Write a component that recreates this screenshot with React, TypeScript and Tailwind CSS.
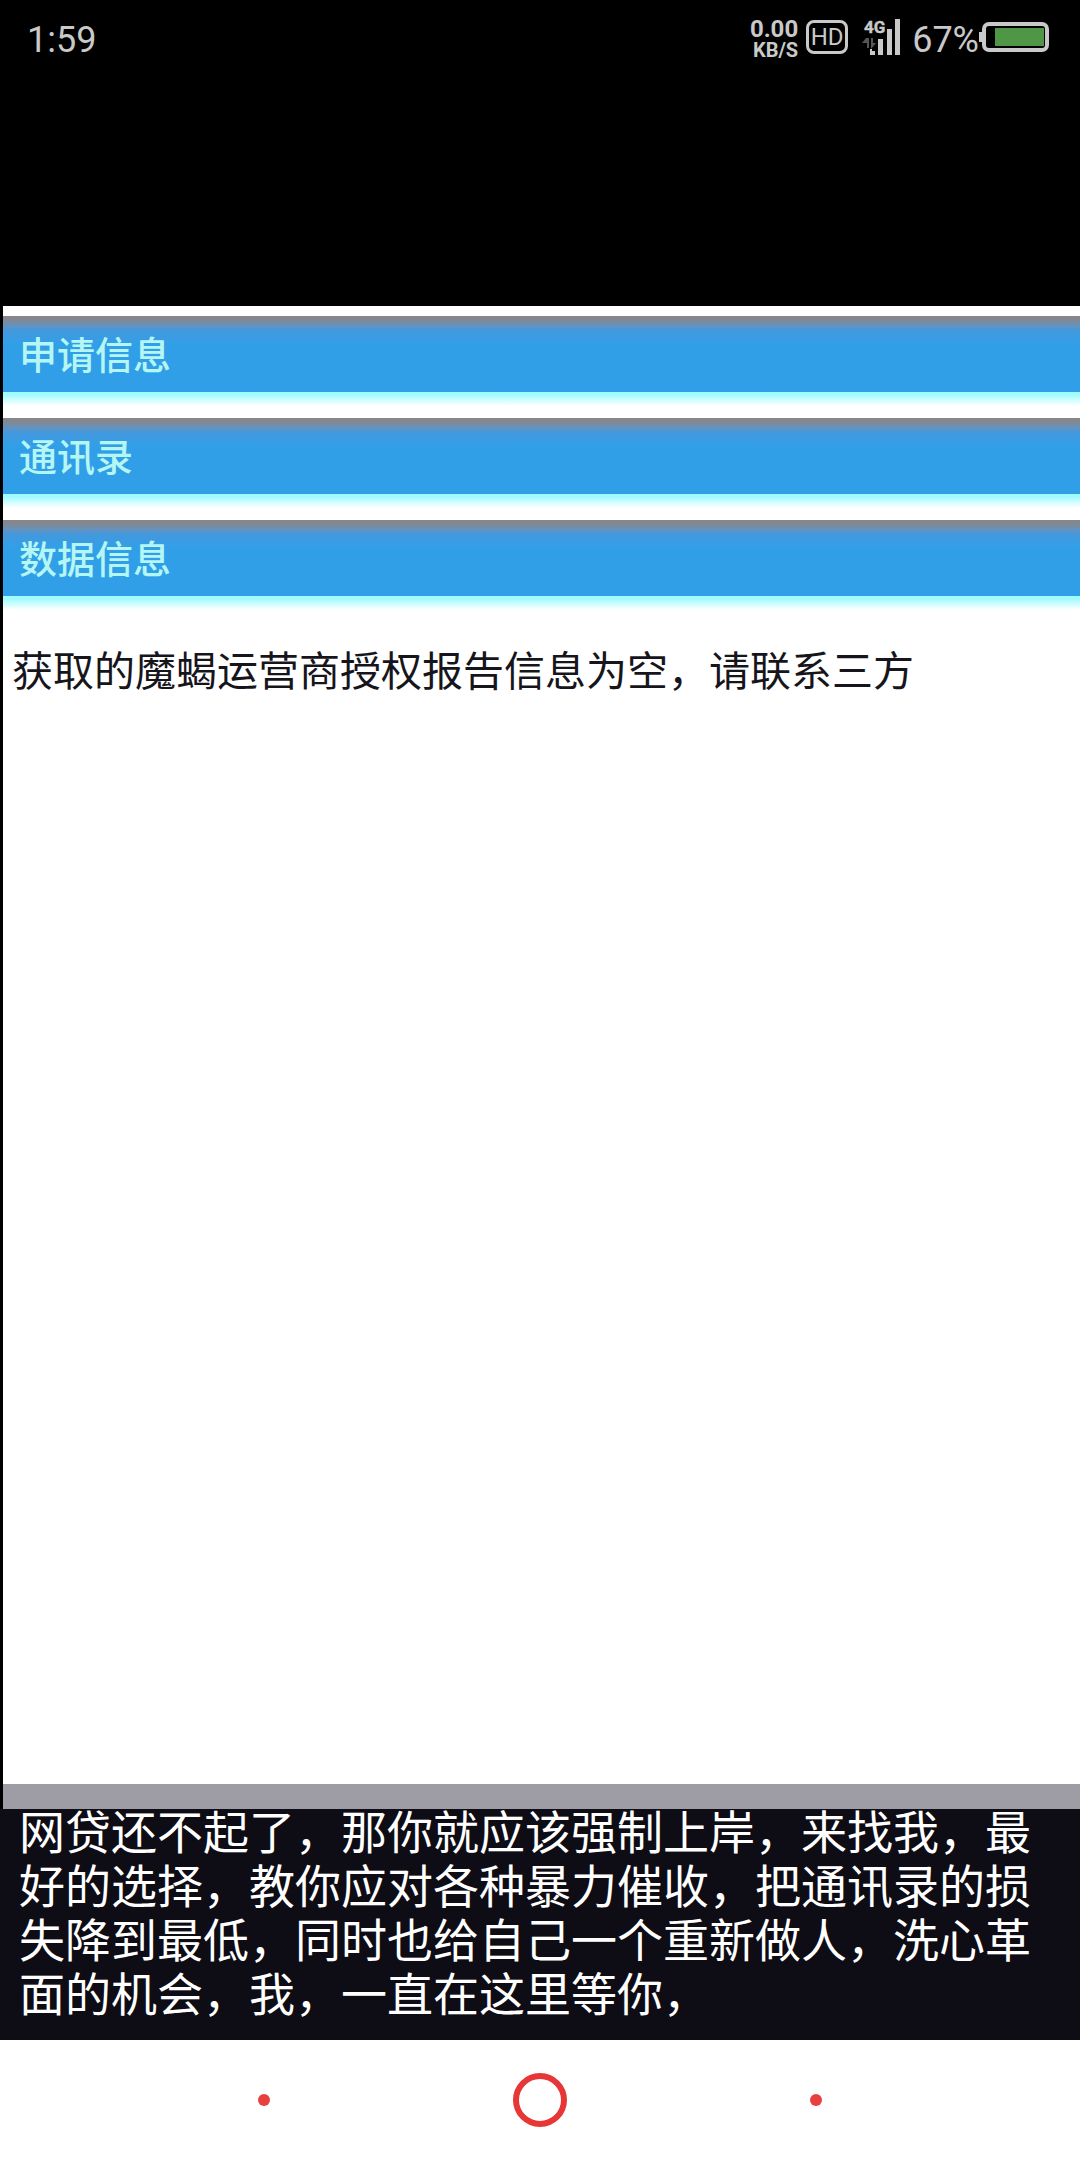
import React from 'react';

const SECTIONS = ['申请信息', '通讯录', '数据信息'];

const SignalIcon: React.FC = () => (
    <svg width="38" height="40" viewBox="0 0 38 40" className="overflow-visible" aria-label="4G">
        <text x="2" y="15" fontFamily="Roboto, sans-serif" fontWeight="700" fontSize="17" fill="#c9c9c9" stroke="#c9c9c9" strokeWidth="0.4">4G</text>
        <path d="M4 20h3v10h-2v-5h-5z M9 31v-11h2v5h3z" fill="#555555" />
        <g fill="#c9c9c9">
            <path d="M8 31h2v2h3v4h-5z" />
            <rect x="16" y="21" width="5" height="16" />
            <rect x="25" y="11" width="5" height="26" />
            <rect x="33" y="1" width="5" height="36" />
        </g>
    </svg>
);

const BatteryIcon: React.FC = () => (
    <svg width="70" height="30" viewBox="0 0 70 30" aria-hidden="true">
        <rect x="0" y="10" width="4" height="10" fill="#c9c9c9" />
        <rect x="5" y="2" width="63" height="26" rx="5" fill="none" stroke="#c9c9c9" strokeWidth="4" />
        <rect x="16" y="6" width="49" height="18" fill="#4f9646" />
    </svg>
);

const StatusBar: React.FC = () => (
    <div className="flex items-start justify-between pl-[27px] pr-[31px] pt-[18px] font-[Roboto,sans-serif] text-[#c9c9c9]">
        <span className="pt-px text-4xl leading-[42px]">1:59</span>
        <div className="flex items-start">
            <p className="mr-2 pt-px text-right text-2xl leading-[20px] font-bold">
                0.00
                <br />
                <span className="text-xl leading-[20px]">KB/S</span>
            </p>
            <span className="mr-3.5 mt-0.5 flex h-[34px] w-[42px] items-center justify-center rounded-lg border-3 border-[#c9c9c9] text-2xl leading-none">
                HD
            </span>
            <SignalIcon />
            <span className="ml-3 pt-px text-4xl leading-[42px]">67%</span>
            <div className="mt-1">
                <BatteryIcon />
            </div>
        </div>
    </div>
);

const NavBar: React.FC = () => (
    <nav className="grid h-[120px] grid-cols-[1fr_504px_1fr] items-center bg-white">
        <button aria-label="返回" className="flex justify-end pr-[18px]">
            <span className="size-3 rounded-full bg-[#e8403f]" />
        </button>
        <button aria-label="主页" className="flex justify-center">
            <span className="size-[54px] rounded-full border-6 border-[#e63636]" />
        </button>
        <button aria-label="最近任务" className="flex justify-start pl-[18px]">
            <span className="size-3 rounded-full bg-[#e8403f]" />
        </button>
    </nav>
);

const App: React.FC = () => {
    return (
        <div className="flex min-h-screen flex-col bg-black font-['Noto_Sans_CJK_SC',sans-serif]">
            <header className="h-[306px]">
                <StatusBar />
            </header>

            <main className="ml-[3px] flex flex-1 flex-col bg-white pt-2.5">
                {SECTIONS.map((title) => (
                    <section key={title}>
                        <h2 className="flex h-[76px] items-center bg-linear-to-b from-[#85878c] from-[3px] via-[#4398dd] via-[14px] to-[#319fe8] to-[28px] pb-0.5 pl-4 text-[38px] leading-[50px] font-medium text-[#b4f6f4]">
                            {title}
                        </h2>
                        {/* brilho abaixo da barra */}
                        <div className="h-[26px] bg-linear-to-b from-[#a0fbff] from-[3px] to-white to-[14px]" />
                    </section>
                ))}
                <p className="px-[9px] pt-[18px] text-[41px] leading-[56px] text-[#17151c]">
                    获取的魔蝎运营商授权报告信息为空，请联系三方
                </p>
                <div className="mt-auto h-[25px] bg-[#9e9ca4]" />
            </main>

            <footer className="bg-[#0e0c14]">
                <p className="-mt-[7px] px-[19px] pb-[22px] text-[46px] leading-[54px] text-white">
                    网贷还不起了，那你就应该强制上岸，来找我，最好的选择，教你应对各种暴力催收，把通讯录的损失降到最低，同时也给自己一个重新做人，洗心革面的机会，我，一直在这里等你，
                </p>
            </footer>

            <NavBar />
        </div>
    );
};

export default App;
